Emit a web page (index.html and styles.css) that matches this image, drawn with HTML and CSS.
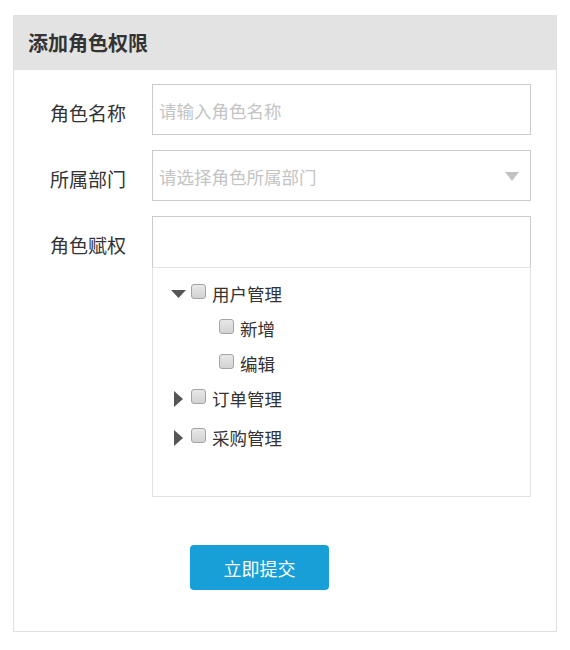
FILE: index.html
```html
<!DOCTYPE html>
<html lang="zh-CN">
<head>
<meta charset="utf-8">
<title>添加角色权限</title>
<link rel="stylesheet" href="styles.css">
</head>
<body>
<div class="card">
  <div class="card-header">添加角色权限</div>
  <form class="form">
    <div class="form-row">
      <label class="form-label">角色名称</label>
      <div class="form-field">
        <input class="text-input" type="text" placeholder="请输入角色名称">
      </div>
    </div>
    <div class="form-row">
      <label class="form-label">所属部门</label>
      <div class="form-field">
        <div class="select-box">
          <span class="select-placeholder">请选择角色所属部门</span>
          <svg class="select-arrow" width="14" height="9" viewBox="0 0 14 9"><path d="M0 0H14L7 9Z" fill="#c2c2c2"/></svg>
        </div>
      </div>
    </div>
    <div class="form-row tree-row">
      <label class="form-label">角色赋权</label>
      <div class="form-field">
        <input class="text-input tree-search" type="text">
        <div class="tree-panel">
          <div class="tree-item">
            <span class="tree-toggle"><svg width="15" height="8" viewBox="0 0 15 8"><path d="M0 0H15L7.5 8Z" fill="#555"/></svg></span>
            <span class="checkbox"></span>
            <span class="tree-text">用户管理</span>
          </div>
          <div class="tree-item tree-child">
            <span class="checkbox"></span>
            <span class="tree-text">新增</span>
          </div>
          <div class="tree-item tree-child">
            <span class="checkbox"></span>
            <span class="tree-text">编辑</span>
          </div>
          <div class="tree-item">
            <span class="tree-toggle"><svg width="9" height="16" viewBox="0 0 9 16"><path d="M0 0V16L9 8Z" fill="#555"/></svg></span>
            <span class="checkbox"></span>
            <span class="tree-text">订单管理</span>
          </div>
          <div class="tree-item tree-gap">
            <span class="tree-toggle"><svg width="9" height="16" viewBox="0 0 9 16"><path d="M0 0V16L9 8Z" fill="#555"/></svg></span>
            <span class="checkbox"></span>
            <span class="tree-text">采购管理</span>
          </div>
        </div>
      </div>
    </div>
    <div class="form-actions">
      <button class="btn-primary" type="button">立即提交</button>
    </div>
  </form>
</div>
</body>
</html>
```

FILE: styles.css
```css
* { box-sizing: border-box; }
html, body {
  margin: 0;
  padding: 0;
  background: #fff;
}
body {
  padding: 15px 13px 0;
  font-family: "Noto Sans CJK SC", "Noto Sans", sans-serif;
  color: #333;
}
.card {
  width: 544px;
  border: 1px solid #e0e0e0;
  background: #fff;
}
.card-header {
  height: 54px;
  line-height: 54px;
  background: #e3e3e3;
  padding-left: 14px;
  font-size: 20px;
  font-weight: bold;
  color: #333;
}
.form {
  margin: 0;
  padding: 14px 0 41px;
}
.form-row {
  display: flex;
  margin-bottom: 15px;
}
.form-row.tree-row { margin-bottom: 0; }
.form-label {
  width: 112px;
  margin-right: 26px;
  height: 51px;
  line-height: 51px;
  padding-top: 3px;
  text-align: right;
  font-size: 19px;
  color: #333;
}
.form-field {
  width: 379px;
}
.text-input {
  display: block;
  width: 100%;
  height: 51px;
  border: 1px solid #cbcbcb;
  padding: 2px 6px 0;
  font-family: inherit;
  font-size: 17.5px;
  color: #333;
  outline: none;
  background: #fff;
}
.text-input::placeholder { color: #c4c4c4; }
.select-box {
  display: flex;
  align-items: center;
  justify-content: space-between;
  height: 51px;
  border: 1px solid #cbcbcb;
  padding: 0 11px 0 6px;
}
.select-placeholder {
  font-size: 17.5px;
  color: #c4c4c4;
  padding-top: 1px;
}
.select-arrow { display: block; margin-top: 1px; }
.tree-search { border-bottom: none; }
.tree-panel {
  height: 230px;
  border: 1px solid #e2e2e2;
  padding-top: 8px;
}
.tree-item {
  display: flex;
  align-items: center;
  height: 35px;
  padding-left: 15px;
}
.tree-item.tree-child { padding-left: 66px; }
.tree-item.tree-gap { margin-top: 4px; }
.tree-toggle {
  width: 23px;
  height: 16px;
  display: flex;
  align-items: center;
  justify-content: center;
  padding-right: 2px;
}
.tree-toggle svg { display: block; }
.checkbox {
  width: 15px;
  height: 15px;
  border: 1px solid #a4a4a4;
  border-radius: 3px;
  background: linear-gradient(#e8e8e8, #d2d2d2);
  transform: translateY(-2px);
}
.tree-text {
  margin-left: 6px;
  font-size: 17.5px;
  color: #333;
}
.form-actions {
  padding-left: 176px;
  margin-top: 48px;
}
.btn-primary {
  display: block;
  width: 139px;
  height: 45px;
  border: none;
  border-radius: 4px;
  background: #189fd7;
  color: #fff;
  font-family: inherit;
  font-size: 18px;
  padding: 0;
  cursor: pointer;
}
```
